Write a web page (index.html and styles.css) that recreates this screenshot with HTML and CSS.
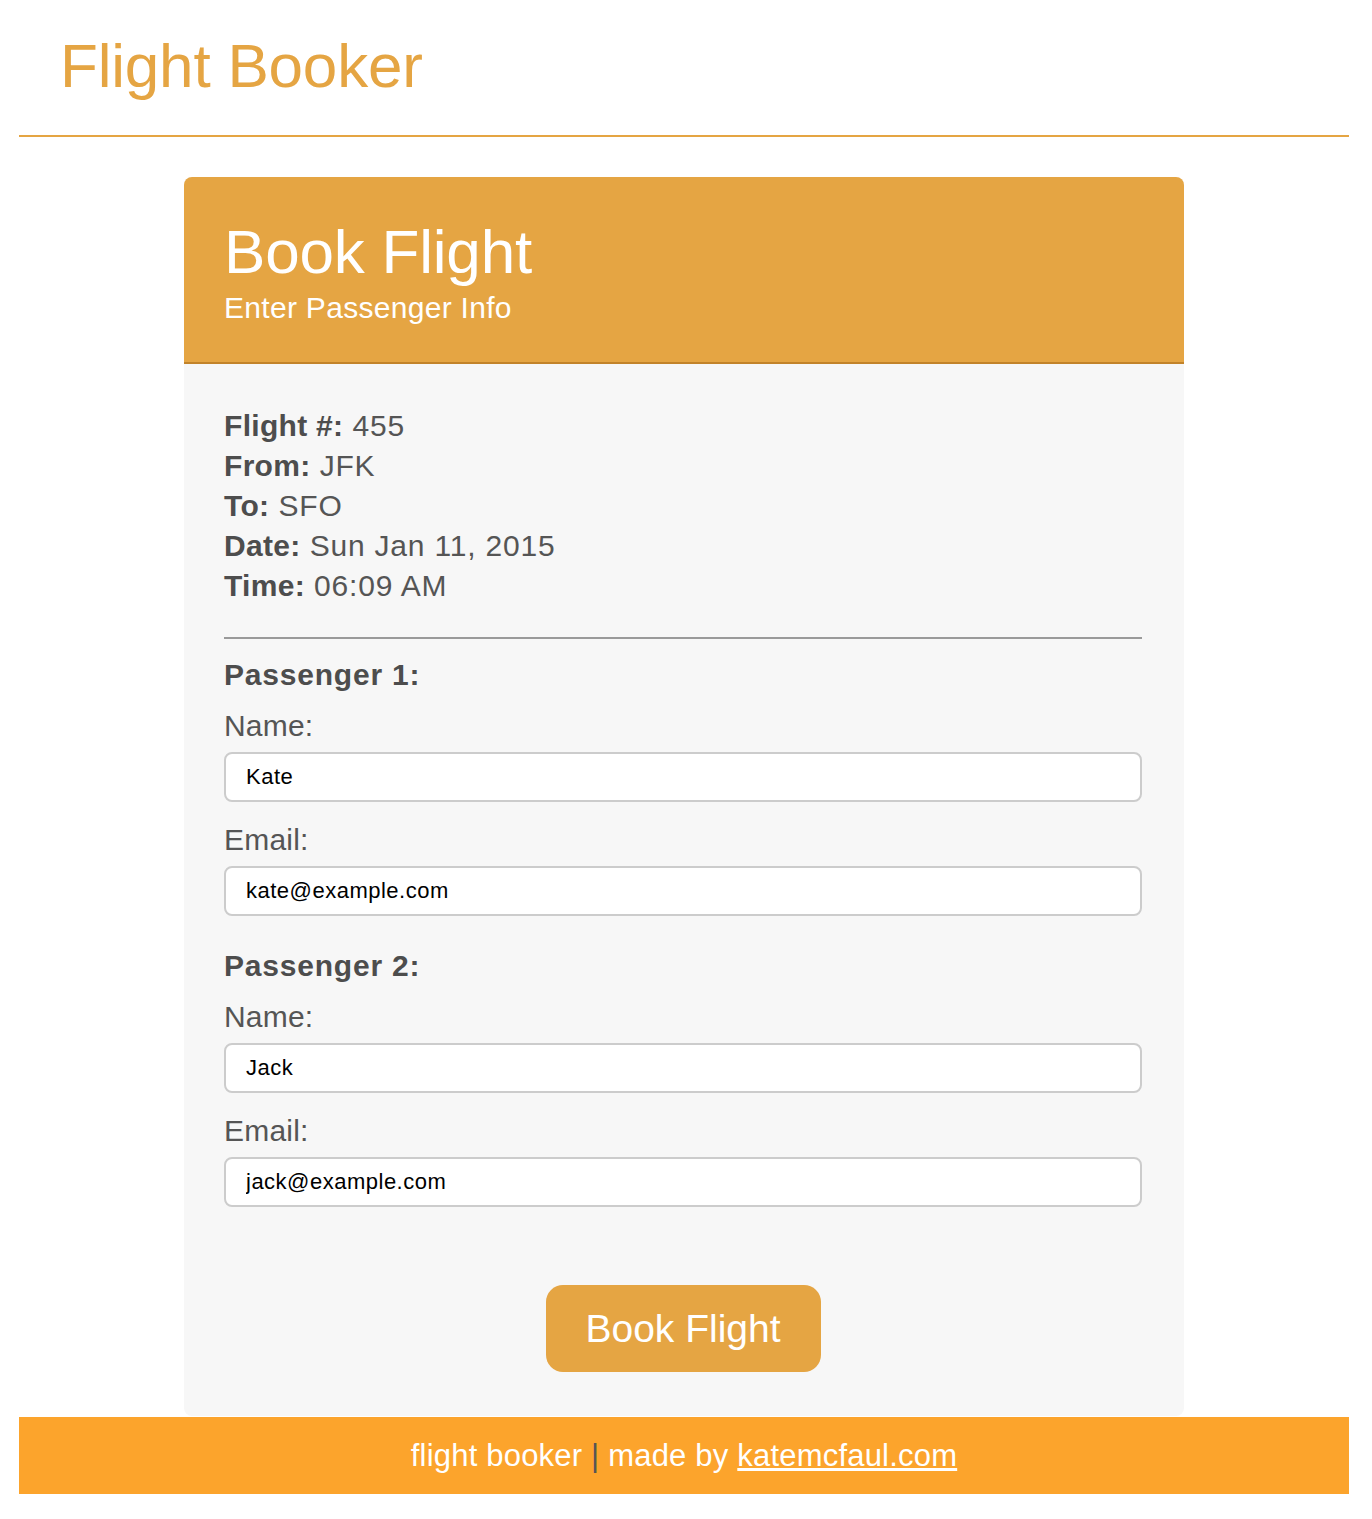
FILE: index.html
```html
<!DOCTYPE html>
<html lang="en">
<head>
<meta charset="utf-8">
<title>Flight Booker</title>
<link rel="stylesheet" href="styles.css">
</head>
<body>
<div class="page">
  <header class="site-header">
    <h1 class="site-title">Flight Booker</h1>
  </header>
  <main class="card">
    <div class="card-header">
      <h2 class="card-title">Book Flight</h2>
      <p class="card-subtitle">Enter Passenger Info</p>
    </div>
    <div class="card-body">
      <div class="flight-info">
        <div class="info-line"><b>Flight #:</b> 455</div>
        <div class="info-line"><b>From:</b> JFK</div>
        <div class="info-line"><b>To:</b> SFO</div>
        <div class="info-line"><b>Date:</b> Sun Jan 11, 2015</div>
        <div class="info-line"><b>Time:</b> 06:09 AM</div>
      </div>
      <hr class="divider">
      <div class="passenger">
        <h3 class="passenger-title">Passenger 1:</h3>
        <label class="field-label">Name:</label>
        <input class="field-input" type="text" value="Kate">
        <label class="field-label field-gap">Email:</label>
        <input class="field-input" type="text" value="kate@example.com">
      </div>
      <div class="passenger">
        <h3 class="passenger-title">Passenger 2:</h3>
        <label class="field-label">Name:</label>
        <input class="field-input" type="text" value="Jack">
        <label class="field-label field-gap">Email:</label>
        <input class="field-input" type="text" value="jack@example.com">
      </div>
      <div class="actions">
        <button class="book-btn" type="button">Book Flight</button>
      </div>
    </div>
  </main>
  <footer class="site-footer">
    flight booker <span class="sep">|</span> made by <a href="#" class="footer-link">katemcfaul.com</a>
  </footer>
</div>
</body>
</html>
```
FILE: styles.css
```css
html, body {
  margin: 0;
  padding: 0;
  background: #ffffff;
}

body {
  font-family: "Helvetica Neue", "Liberation Sans", Arial, sans-serif;
  color: #555555;
}

.page {
  width: 1330px;
  margin: 0 0 0 19px;
  padding-bottom: 25px;
}

.site-header {
  padding: 30px 0 33px 41px;
  border-bottom: 2px solid #e5a543;
}

.site-title {
  margin: 0;
  font-size: 62px;
  line-height: 72px;
  font-weight: normal;
  color: #e5a543;
  letter-spacing: -0.2px;
}

.card {
  display: block;
  width: 1000px;
  margin: 40px 0 0 165px;
  background: #f7f7f7;
  border-radius: 8px;
}

.card-header {
  background: #e5a543;
  border-radius: 8px 8px 0 0;
  border-bottom: 2px solid #c2832a;
  padding: 44px 40px 36px 40px;
  color: #ffffff;
}

.card-title {
  margin: 0;
  font-size: 62px;
  line-height: 62px;
  font-weight: normal;
  letter-spacing: -0.2px;
}

.card-subtitle {
  margin: 7px 0 0 0;
  font-size: 30px;
  line-height: 36px;
  letter-spacing: 0.3px;
}

.card-body {
  padding: 42px 42px 44px 40px;
}

.info-line {
  font-size: 30px;
  line-height: 40px;
  color: #555555;
  letter-spacing: 0.8px;
}

.info-line b {
  color: #4d4d4d;
  letter-spacing: 0.3px;
}

.divider {
  margin: 31px 0 16px 0;
  border: 0;
  height: 2px;
  background: #9a9a9a;
}

.passenger {
  display: flex;
  flex-direction: column;
}

.passenger + .passenger {
  margin-top: 30px;
}

.passenger-title {
  margin: 0 0 11px 0;
  font-size: 30px;
  line-height: 40px;
  font-weight: bold;
  color: #4d4d4d;
  letter-spacing: 0.8px;
}

.field-label {
  display: block;
  font-size: 30px;
  line-height: 40px;
  margin-bottom: 6px;
  color: #555555;
  letter-spacing: 0.2px;
}

.field-gap {
  margin-top: 18px;
}

.field-input {
  box-sizing: border-box;
  width: 100%;
  height: 50px;
  border: 2px solid #cccccc;
  border-radius: 8px;
  background: #ffffff;
  padding: 0 20px;
  font-family: "Helvetica Neue", "Liberation Sans", Arial, sans-serif;
  font-size: 22px;
  letter-spacing: 0.5px;
  color: #000000;
  outline: none;
}

.actions {
  display: flex;
  justify-content: center;
  margin-top: 78px;
}

.book-btn {
  width: 275px;
  height: 87px;
  border: 0;
  border-radius: 17px;
  background: #e5a543;
  color: #ffffff;
  font-family: "Helvetica Neue", "Liberation Sans", Arial, sans-serif;
  font-size: 39px;
  letter-spacing: 0;
  padding: 0;
  cursor: pointer;
}

.site-footer {
  margin-top: 1px;
  height: 77px;
  line-height: 77px;
  background: #fca42c;
  color: #ffffff;
  text-align: center;
  font-size: 31px;
  letter-spacing: 0.2px;
}

.sep {
  color: #555555;
}

.footer-link {
  color: #ffffff;
  text-decoration: underline;
}
```
